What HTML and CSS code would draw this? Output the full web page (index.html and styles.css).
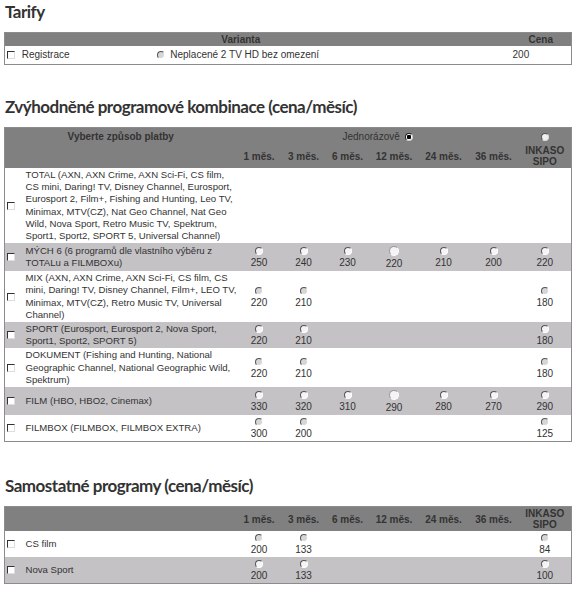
FILE: index.html
```html
<!DOCTYPE html>
<html>
<head>
<meta charset="utf-8">
	<title>Tarify</title>
	<link rel="stylesheet" href="styles.css">
</head>
<body>
<h2 class="title">Tarify</h2>
<table class="grid tarif">
	<colgroup><col class="c-reg"><col class="c-var"><col class="c-gap"><col class="c-price"></colgroup>
	<tr class="head">
		<th colspan="2">Varianta</th><th></th><th>Cena</th>
	</tr>
	<tr>
		<td class="lbl"><input type="checkbox" class="chk"> Registrace</td>
		<td class="lbl"><input type="radio" class="rad" name="tarif"> Neplacené 2 TV HD bez omezení</td>
		<td></td>
		<td class="lbl">200</td>
	</tr>
</table>

<h2 class="title">Zvýhodněné programové kombinace (cena/měsíc)</h2>
<table class="grid prog">
	<colgroup><col class="c-chk"><col class="c-desc"><col class="c-1"><col class="c-3"><col class="c-6"><col class="c-12"><col class="c-24"><col class="c-36"><col class="c-sipo"></colgroup>
	<tr class="head head-top">
		<th colspan="2">Vyberte způsob platby</th>
		<th colspan="6" class="once">Jednorázově <input type="radio" class="rad on" name="pay" checked></th>
		<th><input type="radio" class="rad hd" name="pay"></th>
	</tr>
	<tr class="head">
		<th></th><th></th><th>1 měs.</th><th>3 měs.</th><th>6 měs.</th><th>12 měs.</th><th>24 měs.</th><th>36 měs.</th><th class="sipo">INKASO<br>SIPO</th>
	</tr>
	<tr>
		<td class="cb"><input type="checkbox" class="chk"></td>
		<td class="desc">TOTAL (AXN, AXN Crime, AXN Sci-Fi, CS film, CS mini, Daring! TV, Disney Channel, Eurosport, Eurosport 2, Film+, Fishing and Hunting, Leo TV, Minimax, MTV(CZ), Nat Geo Channel, Nat Geo Wild, Nova Sport, Retro Music TV, Spektrum, Sport1, Sport2, SPORT 5, Universal Channel)</td>
		<td></td><td></td><td></td><td></td><td></td><td></td><td></td>
	</tr>
	<tr class="alt">
		<td class="cb"><input type="checkbox" class="chk"></td>
		<td class="desc">MÝCH 6 (6 programů dle vlastního výběru z TOTALu a FILMBOXu)</td>
		<td class="pr"><input type="radio" class="rad" name="r2">250</td>
		<td class="pr"><input type="radio" class="rad" name="r2">240</td>
		<td class="pr"><input type="radio" class="rad" name="r2">230</td>
		<td class="pr"><input type="radio" class="rad lg" name="r2">220</td>
		<td class="pr"><input type="radio" class="rad" name="r2">210</td>
		<td class="pr"><input type="radio" class="rad" name="r2">200</td>
		<td class="pr"><input type="radio" class="rad" name="r2">220</td>
	</tr>
	<tr>
		<td class="cb"><input type="checkbox" class="chk"></td>
		<td class="desc">MIX (AXN, AXN Crime, AXN Sci-Fi, CS film, CS mini, Daring! TV, Disney Channel, Film+, LEO TV, Minimax, MTV(CZ), Retro Music TV, Universal Channel)</td>
		<td class="pr"><input type="radio" class="rad" name="r3">220</td>
		<td class="pr"><input type="radio" class="rad" name="r3">210</td>
		<td></td><td></td><td></td><td></td>
		<td class="pr"><input type="radio" class="rad" name="r3">180</td>
	</tr>
	<tr class="alt">
		<td class="cb"><input type="checkbox" class="chk"></td>
		<td class="desc">SPORT (Eurosport, Eurosport 2, Nova Sport, Sport1, Sport2, SPORT 5)</td>
		<td class="pr"><input type="radio" class="rad" name="r4">220</td>
		<td class="pr"><input type="radio" class="rad" name="r4">210</td>
		<td></td><td></td><td></td><td></td>
		<td class="pr"><input type="radio" class="rad" name="r4">180</td>
	</tr>
	<tr>
		<td class="cb"><input type="checkbox" class="chk"></td>
		<td class="desc">DOKUMENT (Fishing and Hunting, National Geographic Channel, National Geographic Wild, Spektrum)</td>
		<td class="pr"><input type="radio" class="rad" name="r5">220</td>
		<td class="pr"><input type="radio" class="rad" name="r5">210</td>
		<td></td><td></td><td></td><td></td>
		<td class="pr"><input type="radio" class="rad" name="r5">180</td>
	</tr>
	<tr class="alt">
		<td class="cb"><input type="checkbox" class="chk"></td>
		<td class="desc">FILM (HBO, HBO2, Cinemax)</td>
		<td class="pr"><input type="radio" class="rad" name="r6">330</td>
		<td class="pr"><input type="radio" class="rad" name="r6">320</td>
		<td class="pr"><input type="radio" class="rad" name="r6">310</td>
		<td class="pr"><input type="radio" class="rad lg" name="r6">290</td>
		<td class="pr"><input type="radio" class="rad" name="r6">280</td>
		<td class="pr"><input type="radio" class="rad" name="r6">270</td>
		<td class="pr"><input type="radio" class="rad" name="r6">290</td>
	</tr>
	<tr>
		<td class="cb"><input type="checkbox" class="chk"></td>
		<td class="desc">FILMBOX (FILMBOX, FILMBOX EXTRA)</td>
		<td class="pr"><input type="radio" class="rad" name="r7">300</td>
		<td class="pr"><input type="radio" class="rad" name="r7">200</td>
		<td></td><td></td><td></td><td></td>
		<td class="pr"><input type="radio" class="rad" name="r7">125</td>
	</tr>
</table>

<h2 class="title">Samostatné programy (cena/měsíc)</h2>
<table class="grid prog">
	<colgroup><col class="c-chk"><col class="c-desc"><col class="c-1"><col class="c-3"><col class="c-6"><col class="c-12"><col class="c-24"><col class="c-36"><col class="c-sipo"></colgroup>
	<tr class="head">
		<th></th><th></th><th>1 měs.</th><th>3 měs.</th><th>6 měs.</th><th>12 měs.</th><th>24 měs.</th><th>36 měs.</th><th class="sipo">INKASO<br>SIPO</th>
	</tr>
	<tr>
		<td class="cb"><input type="checkbox" class="chk"></td>
		<td class="desc">CS film</td>
		<td class="pr"><input type="radio" class="rad" name="s1">200</td>
		<td class="pr"><input type="radio" class="rad" name="s1">133</td>
		<td></td><td></td><td></td><td></td>
		<td class="pr"><input type="radio" class="rad" name="s1">84</td>
	</tr>
	<tr class="alt">
		<td class="cb"><input type="checkbox" class="chk"></td>
		<td class="desc">Nova Sport</td>
		<td class="pr"><input type="radio" class="rad" name="s2">200</td>
		<td class="pr"><input type="radio" class="rad" name="s2">133</td>
		<td></td><td></td><td></td><td></td>
		<td class="pr"><input type="radio" class="rad" name="s2">100</td>
	</tr>
</table>
</body>
</html>
```

FILE: styles.css
```css
*{
	margin: 0;
	padding: 0;
}
body{
	padding: 2px 5px 0 4px;
	font-family: "Liberation Sans", Arial, sans-serif;
	font-size: 10px;
	color: #333;
	background: #fff;
}
.title{
	margin: 0 0 10px 1px;
	font-family: Lato, "Open Sans", sans-serif;
	font-size: 17px;
	line-height: 20px;
	font-weight: bold;
	letter-spacing: -0.5px;
	color: #333;
}
.grid{
	width: 567px;
	margin-bottom: 32px;
	border-collapse: collapse;
	table-layout: fixed;
	border: 1px solid #8c8c8c;
}
.grid th{
	background: #808080;
	color: #333;
	font-weight: bold;
	line-height: 11px;
	text-align: center;
	vertical-align: middle;
}
.grid td{
	padding: 1px 2px;
	line-height: 12px;
	vertical-align: middle;
}
.grid .alt td{
	background: #c4c2c5;
}

/* tarify */
.tarif .c-reg{ width: 146px; }
.tarif .c-var{ width: 326px; }
.tarif .c-gap{ width: 34px; }
.tarif .c-price{ width: 61px; }
.tarif th{
	height: 13px;
	padding: 0;
}
.tarif td{
	height: 16px;
}
.tarif .lbl{
	padding-left: 2px;
}
.tarif .lbl .chk{
	margin-right: 4px;
}
.tarif .lbl .rad{
	margin: 0 3px 0 4px;
}

/* programy */
.c-chk{ width: 17px; }
.c-desc{ width: 215px; }
.c-1{ width: 45px; }
.c-3{ width: 44px; }
.c-6{ width: 44px; }
.c-12{ width: 49px; }
.c-24{ width: 50px; }
.c-36{ width: 50px; }
.c-sipo{ width: 53px; }
.prog{
	margin-bottom: 34px;
}
.prog .head th{
	height: 24px;
}
.prog .head-top th{
	height: 16px;
}
.prog .once{
	font-weight: normal;
}
.prog .once .rad{
	margin-left: 2px;
}
.grid .cb{
	padding-left: 2px;
	text-align: left;
}
.grid .desc{
	padding: 1px 0 1px 4px;
	font-size: 9.6px;
	line-height: 12.2px;
}
.pr{
	text-align: center;
}
.pr .rad{
	display: block;
	margin: 2px auto 2px;
}

/* ovladaci prvky */
.chk{
	-webkit-appearance: none;
	appearance: none;
	display: inline-block;
	width: 8px;
	height: 8px;
	vertical-align: -1px;
	background: #fff;
	border: 1px solid;
	border-color: #333 #ddd #ddd #333;
}
.rad{
	-webkit-appearance: none;
	appearance: none;
	display: inline-block;
	width: 8px;
	height: 8px;
	vertical-align: -1px;
	border-radius: 50%;
	border: 1px solid;
	border-color: #555 #fff #fff #555;
	background: #d6d6d6;
}
.alt .rad{
	background: #f4f4f4;
}
.rad.lg{
	width: 10px;
	height: 10px;
	border-color: #999 #fff #fff #999;
	background: #f4f4f4;
}
.rad.on{
	background: radial-gradient(circle, #000 0, #000 2px, #fff 2.5px);
	border-color: #222 #ccc #ccc #222;
}
.rad.hd{
	background: #f0f0f0;
	border-color: #555 #ddd #ddd #555;
}
```
